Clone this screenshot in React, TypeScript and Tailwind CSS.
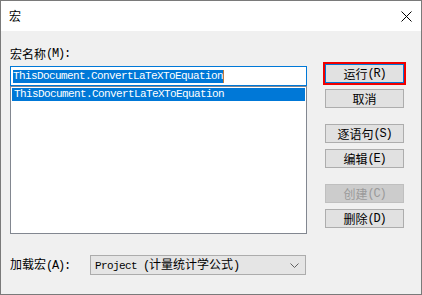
import React from "react";

const CJK = "font-['Noto_Sans_CJK_SC',sans-serif]";
const M = ({ children }: { children: React.ReactNode }) => (
  <span className="font-['Liberation_Mono',monospace] text-[11px] tracking-[-0.6px]">{children}</span>
);
const K = ({ children }: { children: React.ReactNode }) => (
  <span className="font-['Liberation_Mono',monospace] text-[12px] tracking-[-1.2px]">{children}</span>
);

function Btn({ zh, key2, disabled, focus }: { zh: string; key2?: string; disabled?: boolean; focus?: boolean }) {
  return (
    <div
      className={
        "h-[19px] w-[79px] flex items-center justify-center border text-[12px] leading-none " +
        CJK +
        " " +
        (disabled
          ? "bg-[#cccccc] border-[#bfbfbf] text-[#9a9a9a]"
          : focus
          ? "bg-[#e1e1e1] border-[#0078d7] text-black outline-2 outline-solid outline-[#f00000]"
          : "bg-[#e1e1e1] border-[#adadad] text-black")
      }
    >
      <span>{zh}</span>
      {key2 && <K>({key2})</K>}
    </div>
  );
}

export default function App() {
  return (
    <div className="w-[422px] h-[295px] border border-[#7a7a7a] flex flex-col bg-[#f0f0f0] overflow-hidden">
      <div className="h-[30px] bg-white flex items-center justify-between pl-[8px] pr-[9px] shrink-0">
        <span className={"text-[12px] leading-none text-black " + CJK}>宏</span>
        <svg width="11" height="11" viewBox="0 0 11 11">
          <path d="M0.5 0.5 L10.5 10.5 M10.5 0.5 L0.5 10.5" stroke="#000" strokeWidth="1" />
        </svg>
      </div>
      <div className="flex-1 flex flex-row bg-[#f0f0f0]">
        <div className="ml-[9px] w-[297px] flex flex-col">
          <div className={"mt-[16px] h-[14px] flex items-center text-[12px] leading-none text-black " + CJK}>
            <span>宏名称</span>
            <K>(M):</K>
          </div>
          <div className="mt-[5px] h-[20px] border border-[#0078d7] bg-white flex items-center pl-[2px]">
            <div className="h-[13px] bg-[#0078d7] text-white flex items-center leading-none">
              <M>ThisDocument.ConvertLaTeXToEquation</M>
            </div>
            <div className="w-px h-[13px] bg-[#c07a3a]" />
          </div>
          <div className="h-[148px] border border-[#828790] bg-white p-px">
            <div className="h-[13px] bg-[#0078d7] text-white flex items-center pl-[2px] leading-none">
              <M>ThisDocument.ConvertLaTeXToEquation</M>
            </div>
          </div>
          <div className="mt-[21px] flex flex-row items-center">
            <div className={"w-[80px] text-[12px] leading-none text-black " + CJK}>
              <span>加载宏</span>
              <K>(A):</K>
            </div>
            <div className="w-[216px] h-[20px] border border-[#acacac] bg-[#e5e5e5] flex items-center justify-between pl-[4px] pr-[6px]">
              <span className={"text-[12px] leading-none text-black " + CJK}>
                <M>Project </M>
                <K>(</K>计量统计学公式<K>)</K>
              </span>
              <svg width="9" height="5" viewBox="0 0 9 5">
                <path d="M0.5 0.5 L4.5 4.5 L8.5 0.5" stroke="#606060" strokeWidth="1" fill="none" />
              </svg>
            </div>
          </div>
        </div>
        <div className="ml-[18px] w-[79px] flex flex-col">
          <div className="mt-[33px]">
            <Btn zh="运行" key2="R" focus />
          </div>
          <div className="mt-[6px]">
            <Btn zh="取消" />
          </div>
          <div className="mt-[16px]">
            <Btn zh="逐语句" key2="S" />
          </div>
          <div className="mt-[6px]">
            <Btn zh="编辑" key2="E" />
          </div>
          <div className="mt-[16px]">
            <Btn zh="创建" key2="C" disabled />
          </div>
          <div className="mt-[6px]">
            <Btn zh="删除" key2="D" />
          </div>
        </div>
      </div>
    </div>
  );
}
